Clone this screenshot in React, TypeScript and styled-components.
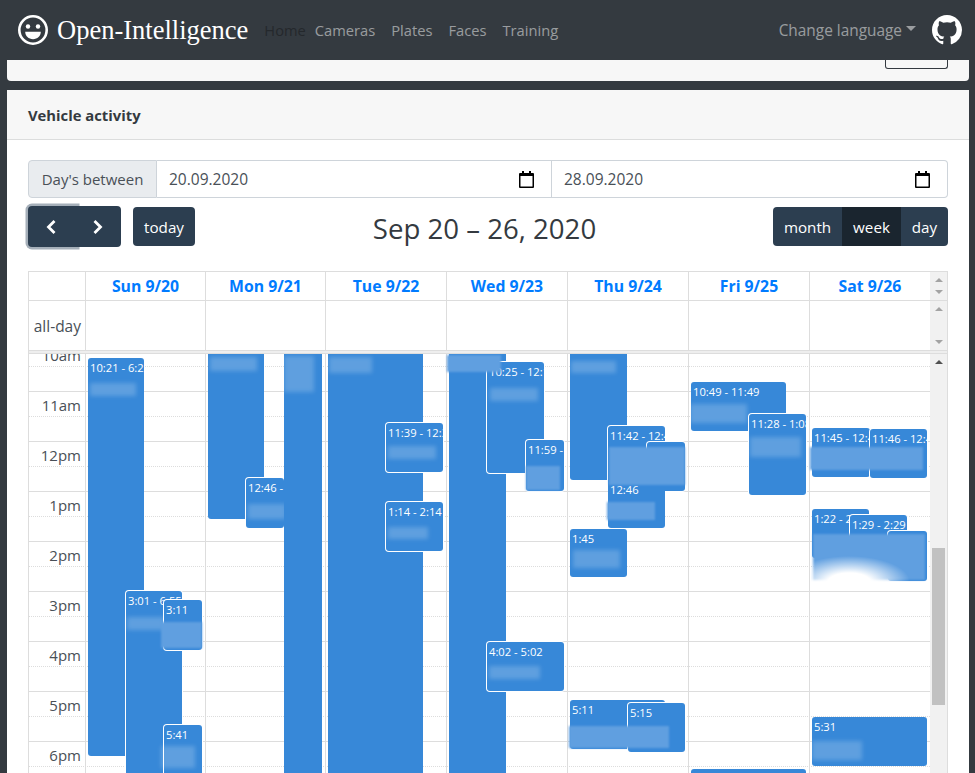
import React from "react";
import styled, { createGlobalStyle } from "styled-components";

const GlobalStyle = createGlobalStyle`
  html, body {
    margin: 0;
    height: 773px;
    overflow: hidden;
    background: #343a40;
    font-family: "Open Sans", "Noto Sans", sans-serif;
    font-size: 15px;
    color: #212529;
  }
  * { box-sizing: border-box; }
`;

const Navbar = styled.nav`
  height: 60px;
  background: #343a40;
  display: flex;
  align-items: center;
  padding: 0 13px 0 18px;
`;

const Brand = styled.a`
  display: flex;
  align-items: center;
  gap: 9px;
  color: #fff;
  font-family: "Liberation Serif", serif;
  font-size: 26.5px;
  margin-right: 16px;
`;

const NavLinks = styled.div`
  display: flex;
  align-items: center;
  flex: 1;
  font-size: 14.7px;
`;

const NavLink = styled.a<{ $active?: boolean }>`
  padding: 0 ${(p) => (p.$active ? "9px" : "16px")} 0 0;
  color: ${(p) => (p.$active ? "#24282c" : "rgba(255,255,255,.5)")};
`;

const LangToggle = styled.a`
  display: flex;
  align-items: center;
  gap: 4px;
  font-size: 15.4px;
  color: rgba(255, 255, 255, 0.5);
  margin-right: 16px;
  &::after {
    content: "";
    border-top: 5px solid rgba(255, 255, 255, 0.5);
    border-left: 5px solid transparent;
    border-right: 5px solid transparent;
    margin-top: -4px;
  }
`;

const Main = styled.main`
  padding: 0 6px 0 7px;
  display: flex;
  flex-direction: column;
  gap: 9px;
`;

const FooterCard = styled.div`
  height: 21px;
  background: #f7f7f7;
  border-radius: 0 0 4px 4px;
  display: flex;
  justify-content: flex-end;
  padding-right: 21px;
`;

const CutButton = styled.div`
  width: 63px;
  height: 9px;
  border: 1px solid #343a40;
  border-top: 0;
  border-radius: 0 0 3px 3px;
`;

const Card = styled.section`
  background: #fff;
  border-radius: 4px 4px 0 0;
`;

const CardHeader = styled.header`
  height: 50px;
  padding: 0 21px;
  display: flex;
  align-items: center;
  background: #f7f7f7;
  border-bottom: 1px solid #dcdddd;
  font-weight: 700;
  font-size: 14.8px;
  color: #343a40;
`;

const CardBody = styled.div`
  padding: 20px 21px 0;
`;

const InputGroup = styled.div`
  display: grid;
  grid-template-columns: 129px 395px 396px;
  height: 38px;
`;

const InputLabel = styled.div`
  display: flex;
  align-items: center;
  justify-content: center;
  background: #e9ecef;
  border: 1px solid #ced4da;
  border-radius: 4px 0 0 4px;
  color: #495057;
`;

const DateField = styled.div<{ $last?: boolean }>`
  display: flex;
  align-items: center;
  justify-content: space-between;
  padding: 0 17px 0 12px;
  border: 1px solid #ced4da;
  border-left: 0;
  border-radius: ${(p) => (p.$last ? "0 4px 4px 0" : "0")};
  font-size: 15.5px;
  color: #495057;
`;

const Toolbar = styled.div`
  display: grid;
  grid-template-columns: 1fr auto 1fr;
  align-items: center;
  margin-top: 8px;
  height: 41px;
`;

const ToolbarLeft = styled.div`
  display: flex;
  align-items: center;
  gap: 12px;
`;

const ToolbarRight = styled.div`
  display: flex;
  justify-content: flex-end;
`;

const ButtonGroup = styled.div`
  display: flex;
`;

const Button = styled.button<{ $w: number; $tall?: boolean; $active?: boolean; $focus?: boolean; $r?: string }>`
  width: ${(p) => p.$w}px;
  height: ${(p) => (p.$tall ? 41 : 39)}px;
  padding: 0;
  display: flex;
  align-items: center;
  justify-content: center;
  border: 0;
  border-radius: ${(p) => p.$r ?? "4px"};
  background: ${(p) => (p.$active ? "#1a252f" : "#2c3e50")};
  color: #fff;
  font: inherit;
  font-size: 15.2px;
  position: relative;
  box-shadow: ${(p) => (p.$focus ? "0 0 0 2.5px rgba(76,95,115,.5)" : "none")};
`;

const Title = styled.h2`
  margin: 0 7px 0 0;
  padding-top: 3px;
  font-size: 27.6px;
  font-weight: 400;
  color: #343a40;
  line-height: 38px;
`;

const Calendar = styled.div`
  margin-top: 24px;
  border: 1px solid #ddd;
  border-bottom: 0;
  height: 502px;
  display: flex;
  flex-direction: column;
`;

const HeadRow = styled.div`
  display: grid;
  grid-template-columns: 56px 120px 120px repeat(5, 121px) 17px;
  height: 29px;
  border-bottom: 1px solid #ddd;
`;

const AllDayRow = styled(HeadRow)`
  height: 49px;
  border-bottom: 0;
`;

const Cell = styled.div`
  border-left: 1px solid #ddd;
  display: flex;
  align-items: center;
  justify-content: center;
`;

const AxisCell = styled.div`
  display: flex;
  align-items: center;
  justify-content: flex-end;
  padding-right: 4px;
  font-size: 15.5px;
  color: #495057;
`;

const DayLink = styled(Cell)`
  color: #007bff;
  font-weight: 700;
  font-size: 15.8px;
`;

const BarStub = styled.div`
  background: #f1f1f1;
  display: flex;
  flex-direction: column;
  align-items: center;
  justify-content: space-between;
  padding: 6px 0;
`;

const Arrow = styled.span<{ $down?: boolean; $dark?: boolean }>`
  width: 0;
  height: 0;
  border-left: 4px solid transparent;
  border-right: 4px solid transparent;
  ${(p) => (p.$down ? "border-top" : "border-bottom")}: 4px solid ${(p) => (p.$dark ? "#505050" : "#a3a3a3")};
`;

const Divider = styled.div`
  height: 4px;
  background: #eee;
  border-top: 1px solid #ddd;
  border-bottom: 1px solid #ddd;
`;

const Scroller = styled.div`
  flex: 1;
  min-height: 0;
  display: flex;
  overflow: hidden;
`;

const TimeGrid = styled.div`
  flex: 1;
  position: relative;
  margin-top: -13px;
`;

const Slot = styled.div<{ $hour?: boolean }>`
  height: 25px;
  border-top: 1px ${(p) => (p.$hour ? "solid #ddd" : "dotted #ddd")};
  display: flex;
`;

const SlotLabel = styled.div`
  width: 56px;
  padding-right: 4px;
  text-align: right;
  line-height: 26px;
  color: #495057;
  white-space: nowrap;
`;

const EventLayer = styled.div`
  position: absolute;
  inset: 0;
  display: grid;
  grid-template-columns: 56px 120px 120px repeat(5, 121px);
  pointer-events: none;
`;

const DayColumn = styled.div`
  position: relative;
  border-left: 1px solid #ddd;
`;

const Event = styled.div<{ $ring?: boolean }>`
  position: absolute;
  background: #3788d8;
  border-radius: 3px;
  color: #fff;
  font-size: 11.2px;
  line-height: 16px;
  padding: 2px 2px 0;
  overflow: hidden;
  white-space: nowrap;
  box-shadow: ${(p) => (p.$ring ? "0 0 0 1px #fff" : "none")};
`;

const Blob = styled.div`
  position: absolute;
  background: rgba(255, 255, 255, 0.2);
  filter: blur(2px);
`;

const Smear = styled.div`
  position: absolute;
  background: #609fe0;
  filter: blur(1.2px);
`;

const WhiteFade = styled.div`
  position: absolute;
  background: radial-gradient(ellipse 62% 100% at 38% 100%, #fff 35%, rgba(255, 255, 255, 0) 100%);
`;

const Track = styled.div`
  width: 17px;
  background: #f1f1f1;
  position: relative;
  display: flex;
  justify-content: center;
  padding-top: 6px;
`;

const Thumb = styled.div`
  position: absolute;
  left: 2px;
  right: 2px;
  top: 194px;
  height: 157px;
  background: #c1c1c1;
`;

const ChevronWrap = styled.span`
  display: flex;
  margin-right: 3px;
`;

type Box = [number, number, number, number];

type CalEvent = {
  col: number;
  box: Box;
  label?: string;
  ring?: boolean;
  blob?: Box;
};

const COLS = [86, 206, 326, 447, 568, 689, 810];

const EVENTS: CalEvent[] = [
  { col: 0, box: [88, 358, 56, 398], label: "10:21 - 6:29", blob: [90, 383, 46, 13] },
  { col: 0, box: [126, 591, 56, 200], label: "3:01 - 6:55", ring: true, blob: [127, 617, 38, 13] },
  { col: 0, box: [164, 600, 38, 50], label: "3:11", ring: true },
  { col: 0, box: [164, 725, 38, 60], label: "5:41", ring: true, blob: [161, 746, 34, 22] },
  { col: 1, box: [208, 340, 56, 179], blob: [210, 357, 47, 14] },
  { col: 1, box: [246, 478, 38, 50], label: "12:46 - 1:46", ring: true, blob: [248, 504, 38, 15] },
  { col: 1, box: [284, 340, 38, 450], blob: [284, 356, 30, 36] },
  { col: 2, box: [328, 340, 95, 450], blob: [329, 357, 43, 16] },
  { col: 2, box: [386, 423, 57, 49], label: "11:39 - 12:39", ring: true, blob: [388, 446, 48, 13] },
  { col: 2, box: [386, 502, 57, 49], label: "1:14 - 2:14", ring: true, blob: [388, 527, 40, 12] },
  { col: 3, box: [449, 340, 57, 450] },
  { col: 3, box: [487, 362, 57, 111], label: "10:25 - 12:15", ring: true, blob: [490, 388, 48, 13] },
  { col: 3, box: [526, 440, 38, 51], label: "11:59 - 12:59", ring: true },
  { col: 3, box: [487, 642, 77, 49], label: "4:02 - 5:02", ring: true, blob: [489, 666, 51, 13] },
  { col: 4, box: [570, 340, 57, 140], blob: [571, 361, 45, 12] },
  { col: 4, box: [608, 426, 57, 60], label: "11:42 - 12:42", ring: true },
  { col: 4, box: [647, 442, 38, 49], ring: true },
  { col: 4, box: [608, 480, 57, 48], label: "12:46" },
  { col: 4, box: [570, 529, 57, 48], label: "1:45", blob: [573, 550, 47, 18] },
  { col: 4, box: [570, 700, 95, 49], label: "5:11" },
  { col: 4, box: [628, 703, 57, 49], label: "5:15", ring: true },
  { col: 5, box: [691, 382, 95, 49], label: "10:49 - 11:49", blob: [690, 404, 57, 19] },
  { col: 5, box: [749, 414, 57, 81], label: "11:28 - 1:08", ring: true, blob: [750, 437, 51, 20] },
  { col: 5, box: [691, 769, 115, 30] },
  { col: 6, box: [812, 428, 58, 49], label: "11:45 - 12:45" },
  { col: 6, box: [870, 429, 57, 49], label: "11:46 - 12:46", ring: true },
  { col: 6, box: [812, 509, 57, 49], label: "1:22 - 2:22" },
  { col: 6, box: [850, 515, 57, 49], label: "1:29 - 2:29", ring: true },
  { col: 6, box: [888, 531, 39, 50], ring: true },
  { col: 6, box: [812, 717, 115, 49], label: "5:31", blob: [812, 741, 50, 19] },
];

// smudged plate numbers that spread over several events, painted last
const SMEARS: { col: number; box: Box }[] = [
  { col: 0, box: [161, 622, 41, 26] },
  { col: 3, box: [447, 355, 54, 17] },
  { col: 3, box: [526, 466, 34, 24] },
  { col: 4, box: [609, 447, 76, 38] },
  { col: 4, box: [607, 502, 48, 18] },
  { col: 4, box: [569, 726, 100, 22] },
  { col: 6, box: [810, 447, 113, 23] },
  { col: 6, box: [813, 534, 112, 46] },
];

const HOURS = ["10am", "11am", "12pm", "1pm", "2pm", "3pm", "4pm", "5pm", "6pm", "7pm"];
const DAYS = ["Sun 9/20", "Mon 9/21", "Tue 9/22", "Wed 9/23", "Thu 9/24", "Fri 9/25", "Sat 9/26"];

// screen y of the 10am line, event boxes above are written in page coordinates
const GRID_TOP = 341;

function place(box: Box, col: number): React.CSSProperties {
  return {
    left: box[0] - COLS[col],
    top: box[1] - GRID_TOP,
    width: box[2],
    height: box[3],
  };
}

function SmileIcon() {
  return (
    <svg width="30" height="30" viewBox="0 0 30 30">
      <circle cx="15" cy="15" r="13.7" fill="none" stroke="#fff" strokeWidth="2.6" />
      <circle cx="10" cy="11.5" r="2.2" fill="#fff" />
      <circle cx="20" cy="11.5" r="2.2" fill="#fff" />
      <path d="M7.2 16.8h15.6c0 4.4-3.4 7.4-7.8 7.4s-7.8-3-7.8-7.4z" fill="#fff" />
    </svg>
  );
}

function GithubIcon() {
  return (
    <svg width="30" height="30" viewBox="0 0 16 16" fill="#fff">
      <path d="M8 0C3.58 0 0 3.58 0 8c0 3.54 2.29 6.53 5.47 7.59.4.07.55-.17.55-.38 0-.19-.01-.82-.01-1.49-2.01.37-2.53-.49-2.69-.94-.09-.23-.48-.94-.82-1.13-.28-.15-.68-.52-.01-.53.63-.01 1.08.58 1.23.82.72 1.21 1.87.87 2.33.66.07-.52.28-.87.51-1.07-1.78-.2-3.64-.89-3.64-3.95 0-.87.31-1.59.82-2.15-.08-.2-.36-1.02.08-2.12 0 0 .67-.21 2.2.82.64-.18 1.32-.27 2-.27.68 0 1.36.09 2 .27 1.53-1.04 2.2-.82 2.2-.82.44 1.1.16 1.92.08 2.12.51.56.82 1.27.82 2.15 0 3.07-1.87 3.75-3.65 3.95.29.25.54.73.54 1.48 0 1.07-.01 1.93-.01 2.2 0 .21.15.46.55.38A8.013 8.013 0 0016 8c0-4.42-3.58-8-8-8z" />
    </svg>
  );
}

function CalendarIcon() {
  return (
    <svg width="15" height="17" viewBox="0 0 15 17">
      <path d="M3 0h2v2h5V0h2v2h2a1 1 0 011 1v13a1 1 0 01-1 1H1a1 1 0 01-1-1V3a1 1 0 011-1h2z" fill="#000" />
      <rect x="1.5" y="5" width="12" height="10.5" fill="#fff" />
    </svg>
  );
}

function Chevron({ dir }: { dir: "left" | "right" }) {
  return (
    <ChevronWrap>
      <svg width="12" height="16" viewBox="0 0 12 16" fill="none" stroke="#fff" strokeWidth="2.8">
        <path d={dir === "left" ? "M9.5 2L3.5 8l6 6" : "M2.5 2l6 6-6 6"} />
      </svg>
    </ChevronWrap>
  );
}

export default function App() {
  return (
    <>
      <GlobalStyle />
      <Navbar>
        <Brand>
          <SmileIcon />
          Open-Intelligence
        </Brand>
        <NavLinks>
          <NavLink $active>Home</NavLink>
          <NavLink>Cameras</NavLink>
          <NavLink>Plates</NavLink>
          <NavLink>Faces</NavLink>
          <NavLink>Training</NavLink>
        </NavLinks>
        <LangToggle>Change language</LangToggle>
        <GithubIcon />
      </Navbar>
      <Main>
        <FooterCard>
          <CutButton />
        </FooterCard>
        <Card>
          <CardHeader>Vehicle activity</CardHeader>
          <CardBody>
            <InputGroup>
              <InputLabel>Day's between</InputLabel>
              <DateField>
                20.09.2020
                <CalendarIcon />
              </DateField>
              <DateField $last>
                28.09.2020
                <CalendarIcon />
              </DateField>
            </InputGroup>
            <Toolbar>
              <ToolbarLeft>
                <ButtonGroup>
                  <Button $w={49} $tall $focus $r="4px 0 0 4px">
                    <Chevron dir="left" />
                  </Button>
                  <Button $w={44} $tall $r="0 4px 4px 0">
                    <Chevron dir="right" />
                  </Button>
                </ButtonGroup>
                <Button $w={62}>today</Button>
              </ToolbarLeft>
              <Title>Sep 20 – 26, 2020</Title>
              <ToolbarRight>
                <ButtonGroup>
                  <Button $w={69} $r="4px 0 0 4px">month</Button>
                  <Button $w={59} $active $r="0">week</Button>
                  <Button $w={47} $r="0 4px 4px 0">day</Button>
                </ButtonGroup>
              </ToolbarRight>
            </Toolbar>
            <Calendar>
              <HeadRow>
                <div />
                {DAYS.map((d) => (
                  <DayLink key={d}>{d}</DayLink>
                ))}
                <BarStub>
                  <Arrow />
                  <Arrow $down />
                </BarStub>
              </HeadRow>
              <AllDayRow>
                <AxisCell>all-day</AxisCell>
                {DAYS.map((d) => (
                  <Cell key={d} />
                ))}
                <BarStub>
                  <Arrow />
                  <Arrow $down />
                </BarStub>
              </AllDayRow>
              <Divider />
              <Scroller>
                <TimeGrid>
                  {HOURS.map((h) => (
                    <React.Fragment key={h}>
                      <Slot $hour>
                        <SlotLabel>{h}</SlotLabel>
                      </Slot>
                      <Slot />
                    </React.Fragment>
                  ))}
                  <EventLayer>
                    <div />
                    {COLS.map((_, col) => (
                      <DayColumn key={col}>
                        {EVENTS.filter((e) => e.col === col).map((e, i) => (
                          <React.Fragment key={i}>
                            <Event $ring={e.ring} style={place(e.box, col)}>
                              {e.label}
                            </Event>
                            {e.blob && <Blob style={place(e.blob, col)} />}
                          </React.Fragment>
                        ))}
                        {SMEARS.filter((s) => s.col === col).map((s, i) => (
                          <Smear key={i} style={place(s.box, col)} />
                        ))}
                        {col === 6 && <WhiteFade style={place([812, 556, 98, 26], col)} />}
                      </DayColumn>
                    ))}
                  </EventLayer>
                </TimeGrid>
                <Track>
                  <Arrow $dark />
                  <Thumb />
                </Track>
              </Scroller>
            </Calendar>
          </CardBody>
        </Card>
      </Main>
    </>
  );
}
